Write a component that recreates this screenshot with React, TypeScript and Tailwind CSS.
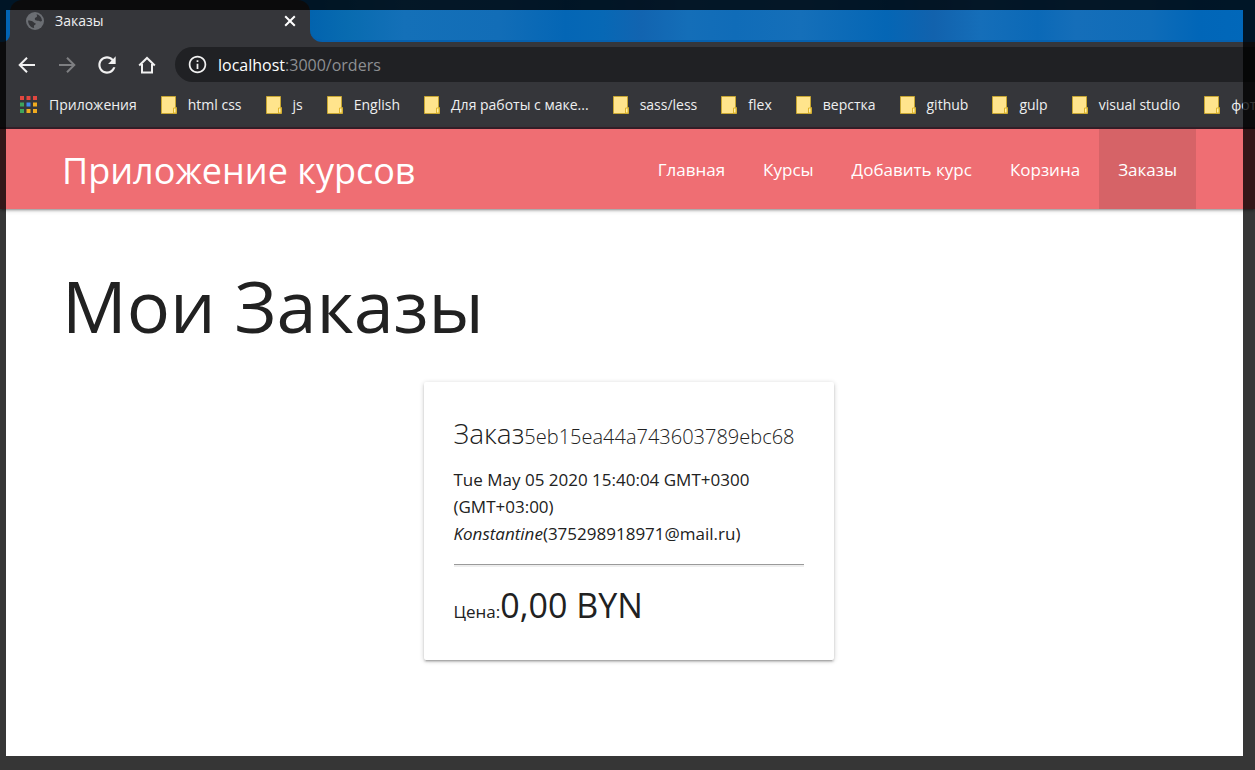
import type { ReactNode } from "react";

const bookmarks = [
  "html css",
  "js",
  "English",
  "Для работы с маке...",
  "sass/less",
  "flex",
  "верстка",
  "github",
  "gulp",
  "visual studio",
  "фото",
];

const navLinks = ["Главная", "Курсы", "Добавить курс", "Корзина", "Заказы"];

const appColors = [
  "#e2473f", "#e2473f", "#e2473f",
  "#3fa45b", "#3f86ef", "#f0ab1f",
  "#3fa45b", "#f0ab1f", "#f0ab1f",
];

function Icon({ d, className }: { d: string; className: string }) {
  return (
    <svg viewBox="0 0 24 24" fill="currentColor" className={className} aria-hidden="true">
      <path d={d} />
    </svg>
  );
}

function ToolButton({ label, children }: { label: string; children: ReactNode }) {
  return (
    <button type="button" aria-label={label} className="flex size-10 shrink-0 items-center justify-center">
      {children}
    </button>
  );
}

function FolderIcon() {
  return (
    <svg viewBox="0 0 16 18" className="h-[18px] w-4 shrink-0" aria-hidden="true">
      <path d="M.5.5h14v11h1v6H.5z" fill="#ffe48c" stroke="#c7a632" />
      <path d="M12.5 17v-5h2.500v5z" fill="#fff0a8" stroke="#e0b52c" />
    </svg>
  );
}

function TabStrip() {
  return (
    <div className="flex h-[42px] bg-[#0164b4]">
      <div className="w-[10px] bg-[#35363a]">
        <div className="h-full rounded-br-lg bg-[#0164b4]" />
      </div>
      <div className="flex w-[300px] items-center rounded-t-xl bg-[#35363a] pr-[12px] pl-[14px]">
        <svg viewBox="0 0 18 18" className="mx-0.5 size-[18px] shrink-0" aria-hidden="true">
          <circle cx="9" cy="9" r="9" fill="#6b6e73" />
          <path
            d="M2.100 8.600c1.500 0 3.200.1 4.700 1 1.200.8 1.800 1.900 3 2 .3 1.300-1.600 1.300-1.900 2.300-.1.800.4 1.400.2 2.100C4.700 15.600 2.100 12.700 2.100 8.600zM10.600 2.200c3 .7 5.300 3.300 5.400 6.600-.8.900-2 .9-2.800.2-.8-.6-1.700-.2-2.700-.4-1.500-.3-2.200-1.500-1.400-2.600.6-.9 1.900-.7 2-1.800.1-.8-.6-1.200-.5-2z"
            fill="#35363a"
          />
        </svg>
        <span className="ml-[9px] flex-1 text-sm text-[#eeeff0]">Заказы</span>
        <button type="button" aria-label="Закрыть вкладку">
          <svg viewBox="0 0 16 16" className="size-4 text-white" aria-hidden="true">
            <path d="M3.200 3.200l9.600 9.600M12.800 3.200l-9.600 9.600" stroke="currentColor" strokeWidth="2" />
          </svg>
        </button>
      </div>
      <div className="min-w-0 flex-1 bg-[#35363a]">
        <div className="h-full rounded-bl-xl border-b-2 border-[#0560ae] bg-[linear-gradient(90deg,#0263ae_0%,#086bb0_4%,#1470b8_10%,#126db7_20%,#0466b5_27%,#0768b5_31%,#1264b0_35%,#146eb8_40%,#106cb8_45%,#156fb9_52%,#0466b5_61%,#1262ad_66%,#156eb9_71%,#0b69b7_77%,#156eb9_81%,#0f6cb8_89%,#0166b8_94%,#0168ba_100%)]" />
      </div>
    </div>
  );
}

function Toolbar() {
  return (
    <div className="flex h-10 items-center pl-[7px]">
      <div className="mt-[5px] flex items-center text-[#f1f1f1]">
        <ToolButton label="Назад">
          <svg viewBox="0 0 18 18" className="size-[18px]" fill="none" stroke="currentColor" strokeWidth="2" aria-hidden="true">
            <path d="M17 9H2M9 1.700L1.700 9 9 16.300" />
          </svg>
        </ToolButton>
        <ToolButton label="Вперёд">
          <svg viewBox="0 0 18 18" className="size-[18px] text-[#7e7f82]" fill="none" stroke="currentColor" strokeWidth="2" aria-hidden="true">
            <path d="M1 9h15M9 1.700L16.300 9 9 16.300" />
          </svg>
        </ToolButton>
        <ToolButton label="Обновить">
          <Icon
            className="size-[26px]"
            d="M17.650 6.350C16.200 4.900 14.210 4 12 4c-4.420 0-7.990 3.580-7.990 8s3.570 8 7.990 8c3.730 0 6.840-2.550 7.730-6h-2.080c-.820 2.330-3.040 4-5.650 4-3.310 0-6-2.690-6-6s2.690-6 6-6c1.660 0 3.140.690 4.220 1.780L13 11h7V4l-2.350 2.350z"
          />
        </ToolButton>
        <ToolButton label="Домой">
          <svg viewBox="0 0 18 18" className="size-[18px]" fill="none" stroke="currentColor" strokeWidth="2" aria-hidden="true">
            <path d="M1.200 9.500L9 2l7.800 7.500M4 8v8.500h10V8" />
          </svg>
        </ToolButton>
      </div>
      <div className="mt-[5px] ml-2 flex h-[35px] min-w-0 flex-1 items-center rounded-l-full bg-[#202124] pl-3">
        <Icon
          className="size-[21px] shrink-0 text-[#f1f1f1]"
          d="M11 7h2v2h-2zm0 4h2v6h-2zm1-9C6.480 2 2 6.480 2 12s4.480 10 10 10 10-4.480 10-10S17.520 2 12 2zm0 18c-4.410 0-8-3.590-8-8s3.590-8 8-8 8 3.590 8 8-3.590 8-8 8z"
        />
        <span className="ml-[10px] text-base text-[#8d8f92]">
          <span className="text-white">localhost</span>:3000/orders
        </span>
      </div>
    </div>
  );
}

function BookmarksBar() {
  return (
    <nav aria-label="Закладки" className="flex h-[47px] items-center gap-6 overflow-hidden border-b-2 border-[#35202a] pl-5 text-sm whitespace-nowrap text-[#eeeff0]">
      <a href="#apps" className="flex shrink-0 items-center gap-3">
        <svg viewBox="0 0 17 17" className="size-[17px]" aria-hidden="true">
          {appColors.map((color, i) => (
            <rect key={i} x={(i % 3) * 6.500} y={Math.floor(i / 3) * 6.500} width="4" height="4" fill={color} />
          ))}
        </svg>
        Приложения
      </a>
      {bookmarks.map((name) => (
        <a key={name} href="#bookmark" className="flex shrink-0 items-center gap-[11px]">
          <FolderIcon />
          {name}
        </a>
      ))}
    </nav>
  );
}

function SiteHeader() {
  return (
    <header className="relative flex h-20 items-stretch justify-between bg-[#ef6e73] pr-[59px] pl-[62px] text-white shadow-[0_2px_2px_0_rgba(0,0,0,0.14),0_3px_1px_-2px_rgba(0,0,0,0.12),0_1px_5px_0_rgba(0,0,0,0.2)]">
      <a href="#home" className="flex items-center pt-1 text-[36px]">
        Приложение курсов
      </a>
      <nav aria-label="Главное меню" className="flex text-[17px]">
        {navLinks.map((name) => (
          <a
            key={name}
            href="#page"
            className={name === "Заказы" ? "flex items-center bg-[#d66367] px-[19px] pt-0.5" : "flex items-center px-[19px] pt-0.5"}
          >
            {name}
          </a>
        ))}
      </nav>
    </header>
  );
}

export default function App() {
  return (
    <div className="relative flex min-h-screen flex-col overflow-hidden bg-white font-['Open_Sans','Noto_Sans',sans-serif] text-[#212121]">
      <div className="bg-[#35363a]">
        <TabStrip />
        <Toolbar />
        <BookmarksBar />
      </div>
      <SiteHeader />
      <main className="flex-1 pt-[55px] pr-[60px] pl-[62px]">
        <h1 className="text-[72px] leading-[83px]">Мои Заказы</h1>
        <section className="mx-auto mt-[35px] w-[410px] rounded-xs bg-white p-[30px] shadow-[0_2px_2px_0_rgba(0,0,0,0.14),0_3px_1px_-2px_rgba(0,0,0,0.12),0_1px_5px_0_rgba(0,0,0,0.2)]">
          <h2 className="mb-2 text-[28px] leading-[42px] font-light whitespace-nowrap">
            Заказ<small className="text-[20px]">5eb15ea44a743603789ebc68</small>
          </h2>
          <p className="text-[17px] leading-[27px]">Tue May 05 2020 15:40:04 GMT+0300 (GMT+03:00)</p>
          <p className="text-[17px] leading-[27px]">
            <em>Konstantine</em>(375298918971@mail.ru)
          </p>
          <hr className="mt-[17px] mb-[13px] border-t border-b-2 border-t-[#9a9a9a] border-b-[#eeeeee]" />
          <p className="text-[17px] leading-[27px]">
            Цена:<span className="text-[34px] leading-[50px]">0,00 BYN</span>
          </p>
        </section>
      </main>
      <div className="pointer-events-none absolute inset-0 border-t-[10px] border-r-[12px] border-b-[14px] border-l-[6px] border-black/79" />
    </div>
  );
}
